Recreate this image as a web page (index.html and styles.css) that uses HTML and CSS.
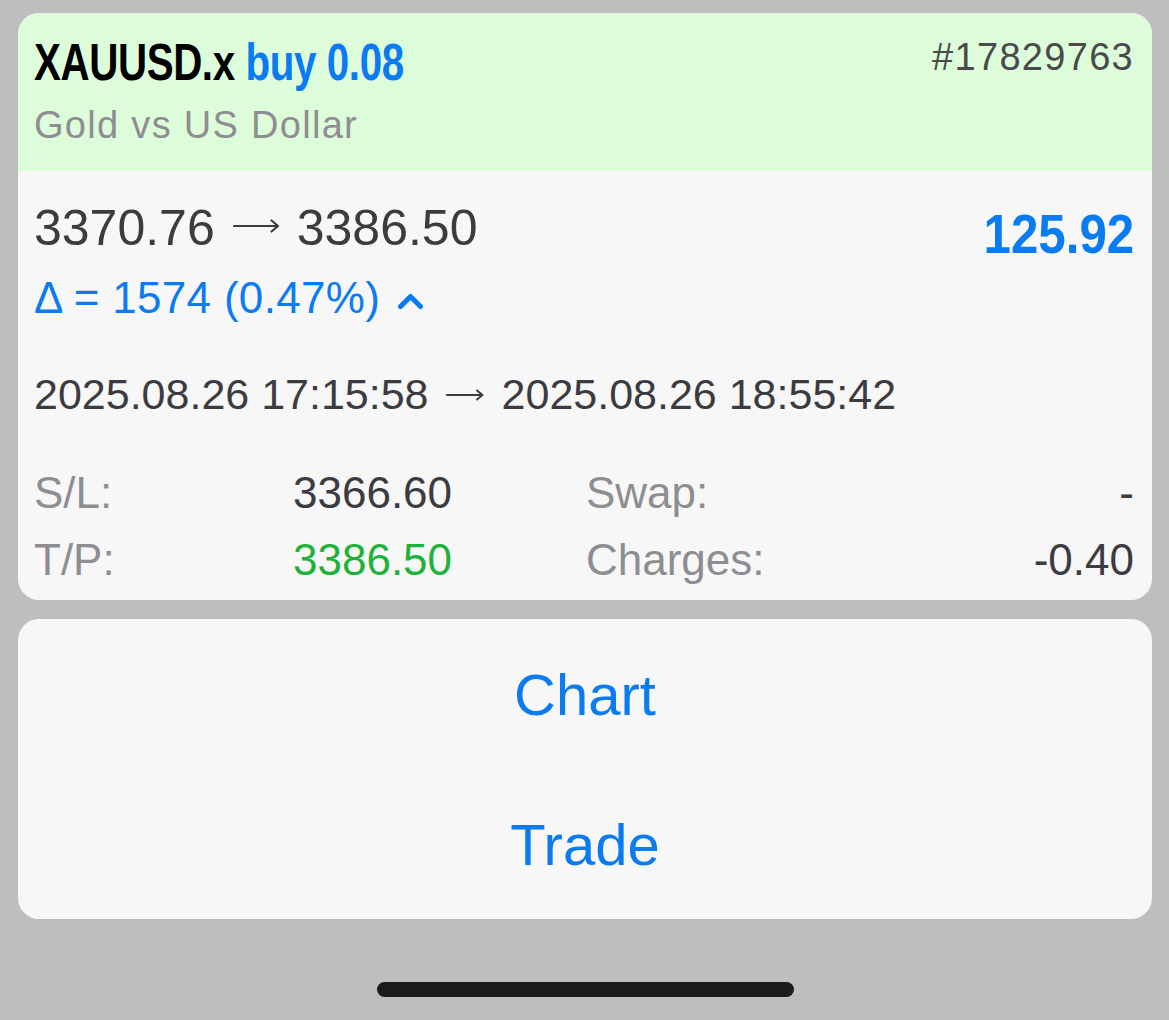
FILE: index.html
```html
<!DOCTYPE html>
<html lang="en">
<head>
  <meta charset="UTF-8" />
  <title>Position XAUUSD.x</title>
  <link rel="stylesheet" href="styles.css">
</head>
<body>

  <div class="sheet">

    <!-- position details -->
    <div class="card">
      <div class="card-head">
        <div class="head-left">
          <h1 class="title"><span class="symbol">XAUUSD.x</span> <span class="side">buy 0.08</span></h1>
          <div class="desc">Gold vs US Dollar</div>
        </div>
        <div class="ticket">#17829763</div>
      </div>

      <div class="card-body">
        <div class="price-row">
          <div class="prices">3370.76<svg class="arrow big" width="47" height="14" viewBox="0 0 47 14"><path d="M1 7 H45 M38.5 1.5 L45 7 L38.5 12.5" fill="none" stroke="currentColor" stroke-width="2.2" stroke-linecap="round" stroke-linejoin="round"/></svg>3386.50</div>
          <div class="profit"><span>125.92</span></div>
        </div>

        <div class="delta">
          &Delta; = 1574 (0.47%)
          <svg class="chev" width="27" height="17" viewBox="0 0 27 17">
            <path d="M3.5 13.5 L13.5 3.5 L23.5 13.5" fill="none" stroke="currentColor" stroke-width="5" stroke-linecap="round" stroke-linejoin="round"/>
          </svg>
        </div>

        <div class="times">2025.08.26 17:15:58<svg class="arrow small" width="38" height="12" viewBox="0 0 38 12"><path d="M1 6 H36.5 M31 1.5 L36.5 6 L31 10.5" fill="none" stroke="currentColor" stroke-width="2" stroke-linecap="round" stroke-linejoin="round"/></svg>2025.08.26 18:55:42</div>

        <div class="stats">
          <span class="lbl">S/L:</span>
          <span class="val">3366.60</span>
          <span class="lbl">Swap:</span>
          <span class="val right">-</span>

          <span class="lbl">T/P:</span>
          <span class="val tp">3386.50</span>
          <span class="lbl">Charges:</span>
          <span class="val right">-0.40</span>
        </div>
      </div>
    </div>

    <!-- actions -->
    <div class="card actions">
      <button class="action">Chart</button>
      <button class="action">Trade</button>
    </div>

    <div class="home-bar"></div>
  </div>

</body>
</html>
```

FILE: styles.css
```css
:root {
  --blue: #0b7bf2;
  --green-bg: #ddfcd9;
  --card-bg: #f7f7f7;
  --page-bg: #bebebe;
  --text-dark: #3c3c40;
  --text-muted: #8e8e92;
  --tp-green: #1fb23a;
}
* {
  box-sizing: border-box;
}
body {
  margin: 0;
  background-color: var(--page-bg);
  font-family: "Liberation Sans", Arial, sans-serif;
  color: var(--text-dark);
  overflow: hidden;
}
.sheet {
  padding: 13px 17px 0 18px;
  display: flex;
  flex-direction: column;
}
.card {
  background-color: var(--card-bg);
  border-radius: 21px;
  overflow: hidden;
}
.card-head {
  background-color: var(--green-bg);
  display: flex;
  justify-content: space-between;
  align-items: flex-start;
  padding: 19px 18px 24px 16px;
}
.title {
  margin: 0;
  display: inline-block;
  font-size: 52px;
  line-height: 60px;
  font-weight: 700;
  white-space: nowrap;
  transform: scaleX(0.775);
  transform-origin: left center;
  letter-spacing: -0.5px;
}
.symbol {
  color: #000;
}
.side {
  color: var(--blue);
}
.desc {
  margin-top: 11px;
  font-size: 38px;
  line-height: 44px;
  letter-spacing: 1.3px;
  color: var(--text-muted);
}
.ticket {
  margin-top: 3px;
  font-size: 38px;
  line-height: 44px;
  letter-spacing: 1.3px;
  color: #4a4a4c;
}
.card-body {
  padding: 29px 18px 7px 16px;
}
.price-row {
  display: flex;
  justify-content: space-between;
  align-items: flex-start;
  height: 56px;
}
.prices {
  font-size: 50px;
  line-height: 56px;
  color: var(--text-dark);
  white-space: nowrap;
}
.arrow.big {
  margin: 0 17px 0 18px;
  vertical-align: 12px;
}
.arrow.small {
  margin: 0 18px 0 17px;
  vertical-align: 8px;
}
.profit {
  margin-top: 6px;
  font-size: 56px;
  line-height: 56px;
  font-weight: 700;
  color: var(--blue);
}
.profit span {
  display: inline-block;
  transform: scaleX(0.88);
  transform-origin: right center;
}
.delta {
  margin-top: 17px;
  font-size: 44px;
  line-height: 50px;
  letter-spacing: 0.3px;
  color: var(--blue);
}
.chev {
  margin-left: 4px;
  vertical-align: 3px;
}
.times {
  margin-top: 46px;
  font-size: 43px;
  line-height: 50px;
  color: var(--text-dark);
  white-space: nowrap;
}
.stats {
  margin-top: 40px;
  display: grid;
  grid-template-columns: 259px 293px 1fr auto;
  grid-auto-rows: 67px;
  font-size: 44px;
  line-height: 67px;
}
.lbl {
  color: var(--text-muted);
}
.val {
  color: var(--text-dark);
}
.val.tp {
  color: var(--tp-green);
}
.val.right {
  text-align: right;
}
.actions {
  margin-top: 19px;
  display: flex;
  flex-direction: column;
}
.action {
  height: 150px;
  border: none;
  background: transparent;
  font-family: "Liberation Sans", Arial, sans-serif;
  font-size: 58px;
  color: var(--blue);
  padding: 0;
  cursor: pointer;
}
.home-bar {
  align-self: center;
  margin-top: 63px;
  width: 417px;
  height: 15px;
  border-radius: 8px;
  background-color: #1c1c1c;
}
```
